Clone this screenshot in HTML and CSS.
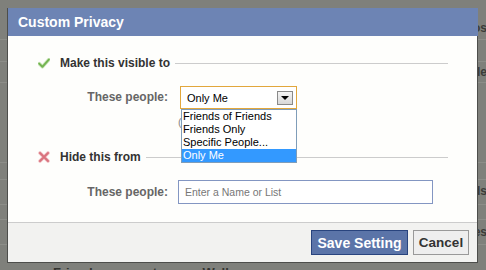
FILE: index.html
```html
<!DOCTYPE html>
<html>
<head>
<meta charset="utf-8">
<title>Custom Privacy</title>
<link rel="stylesheet" href="styles.css">
</head>
<body>
<div class="page">
  <div class="bg-row r1"><span>Photos</span></div>
  <div class="bg-row r2"></div>
  <div class="bg-row r3"><span>Profile</span></div>
  <div class="bg-row r4"></div>
  <div class="bg-row r5"></div>
  <div class="bg-row r6"><span>Friends</span></div>
  <div class="bg-row r7"></div>
  <div class="bg-row r8"><span>Yes</span></div>
  <div class="bg-row r9"></div>
  <div class="bg-foot">Friends can post on my Wall</div>
</div>

<div class="dialog">
  <div class="dialog-title">Custom Privacy</div>
  <div class="dialog-body">
    <div class="sec-head">
      <svg class="sec-icon" width="12" height="11" viewBox="0 0 12 11">
        <path d="M1.2 5.6 L4.4 8.8 L10.8 1.6" fill="none" stroke="#cfe8bf" stroke-width="3.6" stroke-linecap="round" stroke-linejoin="round"/>
        <path d="M1.2 5.6 L4.4 8.8 L10.8 1.6" fill="none" stroke="#74b451" stroke-width="2" stroke-linecap="round" stroke-linejoin="round"/>
      </svg>
      <span class="sec-title">Make this visible to</span>
      <span class="sec-rule"></span>
    </div>
    <div class="field field-select">
      <span class="field-label">These people:</span>
      <div class="select-wrap">
        <div class="select">
          <span class="select-value">Only Me</span>
          <span class="select-btn"><span class="select-tri"></span></span>
        </div>
        <div class="hint">(Only you can see this.)</div>
        <ul class="options">
          <li>Friends of Friends</li>
          <li>Friends Only</li>
          <li>Specific People...</li>
          <li class="selected">Only Me</li>
        </ul>
      </div>
    </div>
    <div class="sec-head sec-second">
      <svg class="sec-icon" width="12" height="12" viewBox="0 0 12 12">
        <path d="M2 2 L10 10 M10 2 L2 10" fill="none" stroke="#f1c3c6" stroke-width="3.6" stroke-linecap="round"/>
        <path d="M2 2 L10 10 M10 2 L2 10" fill="none" stroke="#d9727d" stroke-width="2" stroke-linecap="round"/>
      </svg>
      <span class="sec-title">Hide this from</span>
      <span class="sec-rule"></span>
    </div>
    <div class="field field-input">
      <span class="field-label">These people:</span>
      <div class="text-input">Enter a Name or List</div>
    </div>
  </div>
  <div class="dialog-footer">
    <button class="btn btn-primary">Save Setting</button>
    <button class="btn btn-cancel">Cancel</button>
  </div>
</div>
</body>
</html>
```

FILE: styles.css
```css
html, body {
  margin: 0;
  padding: 0;
}
body {
  width: 486px;
  height: 270px;
  overflow: hidden;
  position: relative;
  background: #7f807b;
  font-family: "Liberation Sans", Arial, sans-serif;
}

/* background page (under overlay) */
.page {
  width: 486px;
}
.bg-row {
  border-bottom: 1px solid #8c8d88;
  box-sizing: border-box;
  text-align: right;
  font-size: 12px;
  font-weight: bold;
  color: #3b3c39;
  white-space: nowrap;
  overflow: hidden;
}
.bg-row span {
  margin-right: -1px;
}
.r1 { height: 40px; padding-top: 21px; line-height: 14px; }
.r2 { height: 22px; }
.r3 { height: 21px; padding-top: 3px; line-height: 14px; }
.r4 { height: 80px; }
.r5 { height: 17px; }
.r6 { height: 25px; padding-top: 4px; line-height: 14px; }
.r7 { height: 15px; }
.r8 { height: 25px; padding-top: 5px; line-height: 14px; }
.r9 { height: 20px; border-bottom: none; }
.bg-foot {
  padding-left: 53px;
  font-size: 13px;
  font-weight: bold;
  color: #333430;
  line-height: 16px;
  white-space: nowrap;
}

/* dialog */
.dialog {
  position: absolute;
  left: 7px;
  top: 8px;
  width: 471px;
  box-sizing: border-box;
  border: 1px solid #4d4e4b;
  border-top: none;
  background: #fefefc;
}
.dialog-title {
  height: 28px;
  line-height: 28px;
  padding-left: 10px;
  background: #6d84b4;
  color: #ffffff;
  font-size: 14px;
  font-weight: bold;
  margin-right: -1px;
}
.dialog-body {
  padding: 20px 29px 18px 30px;
  height: 186px;
  box-sizing: border-box;
}
.sec-head {
  display: flex;
  align-items: center;
  height: 14px;
}
.sec-second {
  margin-top: 21px;
}
.sec-icon {
  flex: none;
  width: 12px;
  margin-right: 10px;
}
.sec-title {
  font-size: 12px;
  font-weight: bold;
  color: #333333;
  line-height: 14px;
  white-space: nowrap;
}
.sec-rule {
  flex: 1;
  height: 1px;
  background: #cccccc;
  margin-left: 5px;
}

.field {
  display: grid;
  grid-template-columns: 130px 1fr;
  column-gap: 10px;
  align-items: start;
}
.field-select {
  margin-top: 16px;
}
.field-input {
  margin-top: 16px;
}
.field-label {
  text-align: right;
  font-size: 12px;
  font-weight: bold;
  color: #666666;
  white-space: nowrap;
}
.field-select .field-label { line-height: 23px; }
.field-input .field-label { line-height: 24px; }

.select-wrap {
  position: relative;
  margin-left: 2px;
  width: 117px;
}
.select {
  height: 23px;
  box-sizing: border-box;
  border: 1px solid #e2a73c;
  background: #ffffff;
  display: flex;
  align-items: center;
  justify-content: space-between;
  padding: 0 3px 0 6px;
}
.select-value {
  font-size: 11px;
  color: #000000;
}
.select-btn {
  width: 16px;
  height: 14px;
  box-sizing: border-box;
  border: 1px solid #8a8a8a;
  background: linear-gradient(#f4f4f4, #d8d8d8);
  display: flex;
  align-items: center;
  justify-content: center;
}
.select-tri {
  width: 0;
  height: 0;
  border-left: 4px solid transparent;
  border-right: 4px solid transparent;
  border-top: 4px solid #000000;
  margin-top: 1px;
}
.hint {
  margin-top: 7px;
  margin-left: -2px;
  width: 121px;
  overflow: hidden;
  white-space: nowrap;
  font-size: 11px;
  line-height: 13px;
  color: #888888;
}
.options {
  position: absolute;
  top: 23px;
  left: 1px;
  width: 116px;
  box-sizing: border-box;
  margin: 0;
  padding: 0;
  list-style: none;
  border: 1px solid #7f9db9;
  background: #ffffff;
}
.options li {
  height: 13px;
  line-height: 13px;
  padding-left: 1px;
  font-size: 11px;
  color: #000000;
  white-space: nowrap;
}
.options li.selected {
  background: #3399ff;
  color: #ffffff;
}

.text-input {
  width: 255px;
  height: 24px;
  box-sizing: border-box;
  border: 1px solid #8396c2;
  background: #ffffff;
  padding-left: 6px;
  line-height: 22px;
  font-size: 10.5px;
  color: #777777;
}

.dialog-footer {
  height: 40px;
  box-sizing: border-box;
  border-top: 1px solid #cccccc;
  background: #f2f2f0;
  display: flex;
  justify-content: flex-end;
  align-items: flex-start;
  gap: 5px;
  padding: 7px 8px 0 0;
}
.btn {
  height: 25px;
  box-sizing: border-box;
  padding: 0;
  font-family: "Liberation Sans", Arial, sans-serif;
  font-size: 14px;
  font-weight: bold;
  cursor: pointer;
}
.btn-primary {
  width: 97px;
  background: #5b74a8;
  border: 1px solid #29447e;
  color: #ffffff;
}
.btn-cancel {
  width: 56px;
  background: #eeeeee;
  border: 1px solid #999999;
  color: #333333;
  font-size: 13.5px;
}
```
